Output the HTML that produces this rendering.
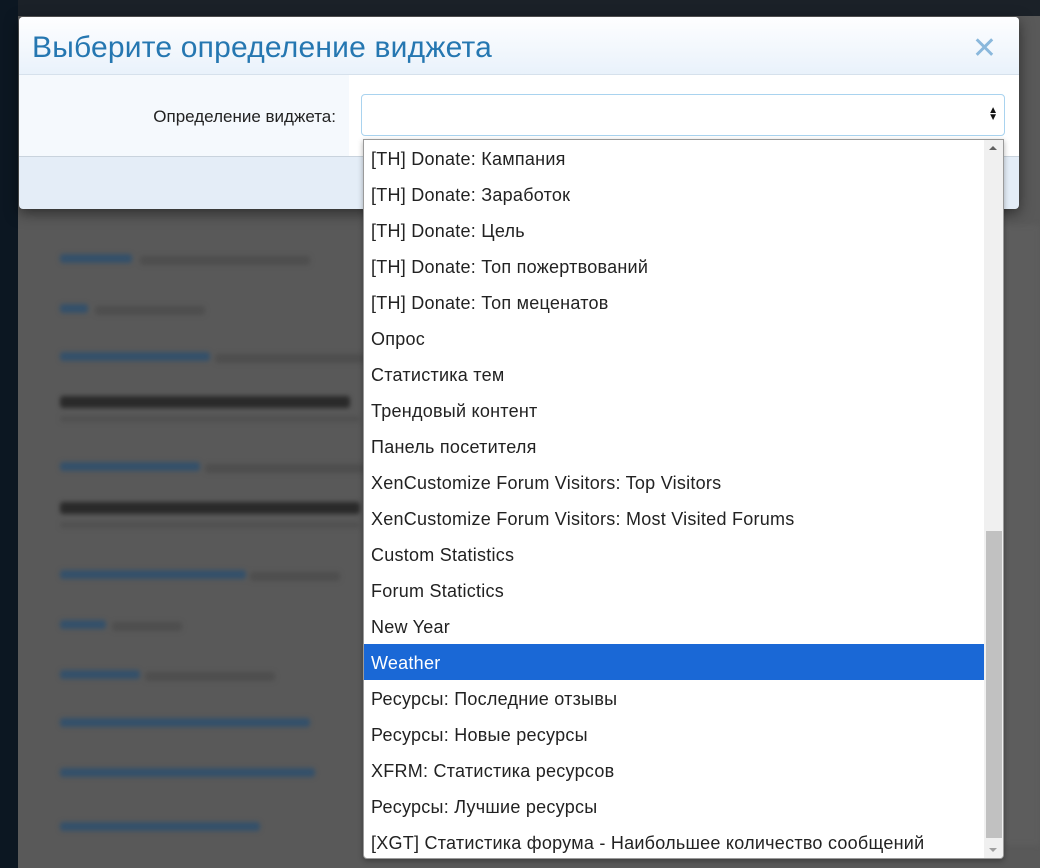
<!DOCTYPE html>
<html><head><meta charset="utf-8"><style>
*{box-sizing:border-box;margin:0;padding:0}
body{width:1040px;height:868px;overflow:hidden;background:#595959;font-family:"Segoe UI","Liberation Sans","DejaVu Sans",sans-serif;position:relative}
.left{position:absolute;left:0;top:0;width:18px;height:868px;background:#0c1722}
.top{position:absolute;left:0;top:0;width:1040px;height:16px;background:#1b2128}
.bg{position:absolute;filter:blur(2.5px)}
.b{position:absolute;height:9px;border-radius:3px}
.dlg{position:absolute;left:19px;top:17px;width:1000px;height:192px;border-radius:4px;overflow:hidden;background:#e4edf7;box-shadow:0 4px 14px rgba(0,0,0,.5)}
.hd{height:58px;background:linear-gradient(#fefeff,#e9f2fb);border-bottom:1px solid #d6e1ec;position:relative}
.hd h1{font-weight:normal;font-size:30px;color:#2577b1;position:absolute;left:13px;top:14px;letter-spacing:0.2px}
.x{position:absolute;right:22px;top:14px;font-size:30px;color:#8ab8dc;font-weight:bold}
.row{height:82px;background:#fff;border-bottom:1px solid #c9d3dd;position:relative}
.lab{position:absolute;left:0;top:0;width:330px;height:81px;background:#f5f9fd}
.lab span{position:absolute;right:13px;top:32px;font-size:17px;color:#222}
.sel{position:absolute;left:342px;top:19px;width:644px;height:42px;border:1px solid #a9d3ef;border-radius:4px;background:#fff}
.sel i{position:absolute;right:6px;top:12px;font-style:normal;font-size:10px;line-height:7px;color:#111}
.list{position:absolute;left:363px;top:139px;width:641px;height:720px;background:#fff;border:1px solid #9a9a9a;border-radius:0 0 4px 4px;box-shadow:0 2px 6px rgba(0,0,0,.3);overflow:hidden}
.it{height:36px;line-height:36px;padding-left:7px;padding-top:1px;font-size:18px;letter-spacing:0.25px;color:#222;white-space:nowrap}
.it.s{background:#1a68d6;color:#fff;width:620px}
.sb{position:absolute;left:620px;top:0;width:19px;height:718px;background:#f0f0f0}
.th{position:absolute;left:2px;top:391px;width:16px;height:307px;background:#c1c1c1}
</style></head><body>
<div class="top"></div>
<div class="bg" style="left:0;top:0;width:1040px;height:868px">
<div class="b" style="left:60px;top:254px;width:72px;background:#34506a"></div><div class="b" style="left:140px;top:256px;width:170px;background:#4e4e4e"></div>
<div class="b" style="left:60px;top:304px;width:28px;background:#34506a"></div><div class="b" style="left:95px;top:306px;width:110px;background:#4e4e4e"></div>
<div class="b" style="left:60px;top:352px;width:150px;background:#34506a"></div><div class="b" style="left:215px;top:354px;width:150px;background:#4e4e4e"></div>
<div class="b" style="left:60px;top:396px;width:290px;height:12px;background:#2a2a2a"></div><div class="b" style="left:60px;top:416px;width:300px;height:6px;background:#505050"></div>
<div class="b" style="left:60px;top:462px;width:140px;background:#34506a"></div><div class="b" style="left:205px;top:464px;width:160px;background:#4e4e4e"></div>
<div class="b" style="left:60px;top:502px;width:300px;height:12px;background:#2a2a2a"></div><div class="b" style="left:60px;top:522px;width:300px;height:6px;background:#505050"></div>
<div class="b" style="left:60px;top:570px;width:186px;background:#34506a"></div><div class="b" style="left:250px;top:572px;width:90px;background:#4e4e4e"></div>
<div class="b" style="left:60px;top:620px;width:46px;background:#34506a"></div><div class="b" style="left:112px;top:622px;width:70px;background:#4e4e4e"></div>
<div class="b" style="left:60px;top:670px;width:80px;background:#34506a"></div><div class="b" style="left:145px;top:672px;width:130px;background:#4e4e4e"></div>
<div class="b" style="left:60px;top:718px;width:250px;background:#34506a"></div>
<div class="b" style="left:60px;top:768px;width:255px;background:#34506a"></div>
<div class="b" style="left:60px;top:822px;width:200px;background:#34506a"></div>
<div class="b" style="left:1004px;top:225px;width:36px;height:620px;background:#5d5d5d"></div>
</div>
<div class="left"></div>
<div class="dlg">
<div class="hd"><h1>Выберите определение виджета</h1><div class="x">✕</div></div>
<div class="row"><div class="lab"><span>Определение виджета:</span></div><div class="sel"><i>▲<br>▼</i></div></div>
</div>
<div class="list">
<div class="it">[TH] Donate: Кампания</div>
<div class="it">[TH] Donate: Заработок</div>
<div class="it">[TH] Donate: Цель</div>
<div class="it">[TH] Donate: Топ пожертвований</div>
<div class="it">[TH] Donate: Топ меценатов</div>
<div class="it">Опрос</div>
<div class="it">Статистика тем</div>
<div class="it">Трендовый контент</div>
<div class="it">Панель посетителя</div>
<div class="it">XenCustomize Forum Visitors: Top Visitors</div>
<div class="it">XenCustomize Forum Visitors: Most Visited Forums</div>
<div class="it">Custom Statistics</div>
<div class="it">Forum Statictics</div>
<div class="it">New Year</div>
<div class="it s">Weather</div>
<div class="it">Ресурсы: Последние отзывы</div>
<div class="it">Ресурсы: Новые ресурсы</div>
<div class="it">XFRM: Статистика ресурсов</div>
<div class="it">Ресурсы: Лучшие ресурсы</div>
<div class="it">[XGT] Статистика форума - Наибольшее количество сообщений</div>
<div class="sb"><div style="position:absolute;left:5px;top:6px;border:4px solid transparent;border-bottom:4px solid #606060;border-top:0"></div><div class="th"></div><div style="position:absolute;left:5px;top:708px;border:4px solid transparent;border-top:4px solid #a0a0a0;border-bottom:0"></div></div>
</div>
</body></html>
